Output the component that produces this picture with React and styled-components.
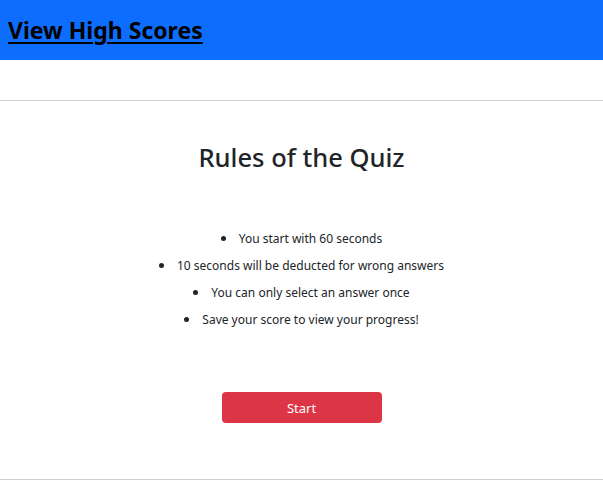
import React from "react";
import styled, { createGlobalStyle } from "styled-components";

const GlobalStyle = createGlobalStyle`
  body {
    margin: 0;
    font-family: "Noto Sans", "Open Sans", sans-serif;
    color: #212529;
    background: #fff;
  }
`;

const Header = styled.header`
  height: 60px;
  background: #0d6efd;
  display: flex;
  align-items: center;
  padding: 0 8px;
`;

const HighScoresLink = styled.a`
  color: #000;
  font-size: 23px;
  font-weight: 700;
  text-decoration: underline;
  text-underline-offset: 3px;
  cursor: pointer;
`;

const Rule = styled.hr`
  margin: ${(p) => p.$top || 0}px 0 0;
  border: 0;
  border-top: 1px solid #d0d0d0;
`;

const Main = styled.main`
  display: flex;
  flex-direction: column;
  align-items: center;
`;

const Title = styled.h1`
  margin: 38px 0 0;
  font-size: 25.5px;
  font-weight: 500;
  line-height: 36px;
`;

const RulesList = styled.ul`
  margin: 54px 0 0;
  padding: 0;
  list-style: none;
  text-align: center;
  font-size: 12px;
  line-height: 19px;
`;

const RuleItem = styled.li`
  margin-bottom: 8px;
  &::before {
    content: "";
    display: inline-block;
    width: 5px;
    height: 5px;
    border-radius: 50%;
    background: #212529;
    margin-right: 13px;
    vertical-align: 2px;
  }
`;

const StartButton = styled.button`
  margin-top: 55px;
  width: 160px;
  height: 31px;
  border: 0;
  border-radius: 4px;
  background: #dc3545;
  color: #fff;
  font-family: inherit;
  font-size: 13px;
  cursor: pointer;
`;

const rules = [
  "You start with 60 seconds",
  "10 seconds will be deducted for wrong answers",
  "You can only select an answer once",
  "Save your score to view your progress!",
];

const App = () => {
  return (
    <>
      <GlobalStyle />
      <Header>
        <HighScoresLink>View High Scores</HighScoresLink>
      </Header>
      <Rule $top={40} />
      <Main>
        <Title>Rules of the Quiz</Title>
        <RulesList>
          {rules.map((r) => (
            <RuleItem key={r}>{r}</RuleItem>
          ))}
        </RulesList>
        <StartButton>Start</StartButton>
      </Main>
      <Rule $top={56} />
    </>
  );
};

export default App;
